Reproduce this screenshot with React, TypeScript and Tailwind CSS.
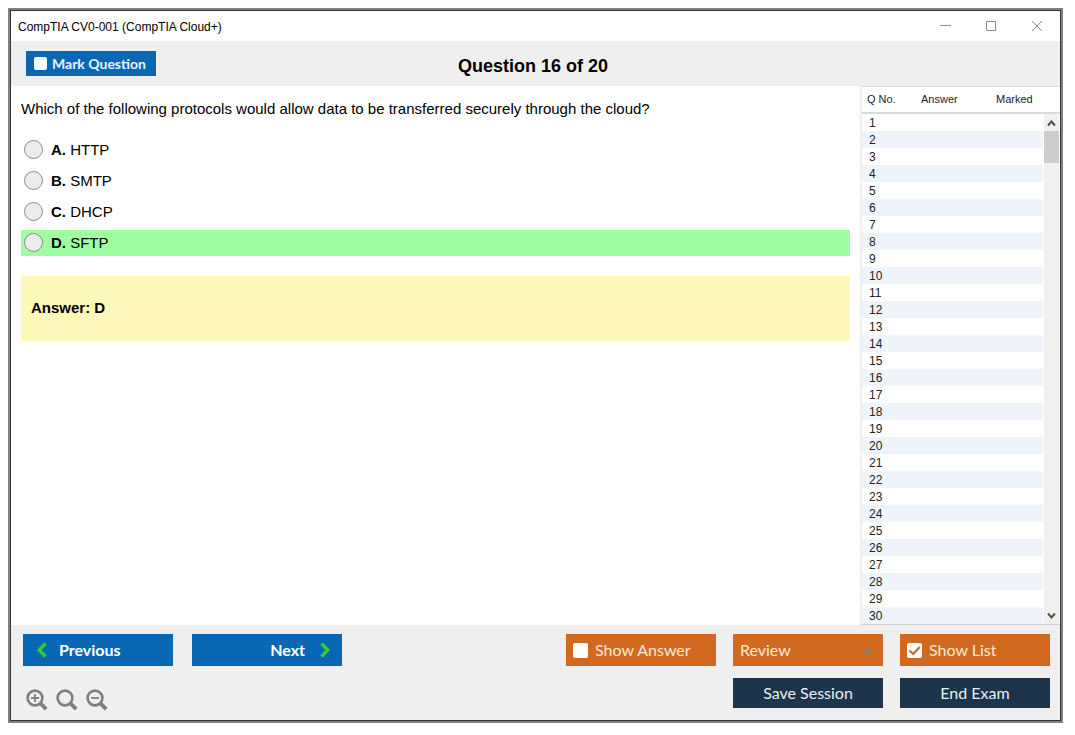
import React, { useState } from 'react';

interface OptionI {
  letter: string;
  text: string;
}

const options: OptionI[] = [
  { letter: 'A', text: 'HTTP' },
  { letter: 'B', text: 'SMTP' },
  { letter: 'C', text: 'DHCP' },
  { letter: 'D', text: 'SFTP' },
];

const correct = 'D';
const rows = Array.from({ length: 30 }, (_, i) => i + 1);

function TitleBar() {
  return (
    <header className="flex h-[30px] items-center justify-between bg-white pl-[7px]">
      <h1 className="pt-px text-[12px] leading-4">CompTIA CV0-001 (CompTIA Cloud+)</h1>
      <div className="flex h-full text-[#8c8c8c]">
        <button aria-label="Minimize" className="flex w-[46px] items-center justify-center">
          <svg width="11" height="11" stroke="currentColor" fill="none"><path d="M0 4.5h11" /></svg>
        </button>
        <button aria-label="Maximize" className="flex w-[46px] items-center justify-center">
          <svg width="11" height="11" stroke="currentColor" fill="none"><path d="M.5.5h9v9h-9z" /></svg>
        </button>
        <button aria-label="Close" className="flex w-[46px] items-center justify-center">
          <svg width="11" height="11" stroke="currentColor" fill="none"><path d="M0 0l10 10M10 0L0 10" /></svg>
        </button>
      </div>
    </header>
  );
}

interface CheckI {
  label: string;
  checked: boolean;
  onChange: (v: boolean) => void;
}

function OrangeCheck({ label, checked, onChange }: CheckI) {
  return (
    <label className="flex h-8 items-center gap-[7px] bg-[#d2691e] pl-[7px] text-[16px] text-[#fbe9dc]">
      <span className="relative flex">
        <input
          type="checkbox"
          checked={checked}
          onChange={(e) => onChange(e.target.checked)}
          className="size-[15px] appearance-none rounded-xs bg-white"
        />
        {checked && (
          <svg className="pointer-events-none absolute inset-0" width="15" height="15" fill="none" stroke="#d2691e" strokeWidth="2.2">
            <path d="M2.5 7.5l3.7 3.5L12.7 4" />
          </svg>
        )}
      </span>
      {label}
    </label>
  );
}

function ZoomButton({ label, mark }: { label: string; mark?: string }) {
  return (
    <button aria-label={label}>
      <svg width="22" height="22" fill="none" stroke="#808080">
        <circle cx="9" cy="9" r="7.4" strokeWidth="2.6" />
        <path d="M14.2 14.2l6 6" strokeWidth="3.8" />
        {mark && <path d={mark} strokeWidth="1.8" />}
      </svg>
    </button>
  );
}

function QuestionList() {
  return (
    <aside className="flex w-[200px] flex-none border-b border-l-2 border-b-[#d0d0d0] border-l-[#efefef]">
      <table className="flex-1 table-fixed border-separate border-spacing-0 self-start text-left text-[#222]">
        <thead>
          <tr className="h-7 text-[11px] leading-4">
            <th className="w-[59px] border-t border-b-2 border-[#d9d9d9] p-0 pb-px pl-[5px] font-normal">Q No.</th>
            <th className="w-[75px] border-t border-b-2 border-[#d9d9d9] p-0 pb-px font-normal">Answer</th>
            <th className="border-t border-b-2 border-[#d9d9d9] p-0 pb-px font-normal">Marked</th>
          </tr>
        </thead>
        <tbody className="text-[12px] leading-4">
          {rows.map((n) => (
            <tr key={n} className="even:bg-[#eef4f9]">
              <td className="p-0 pt-px pl-[7px]">{n}</td>
              <td className="p-0"></td>
              <td className="p-0"></td>
            </tr>
          ))}
        </tbody>
      </table>
      <div className="flex w-[17px] flex-col">
        <div className="h-7 border-t border-b-2 border-[#d9d9d9]" />
        <div className="mr-px ml-px flex flex-1 flex-col items-center bg-[#f0f0f0]">
          <button aria-label="Scroll up" className="flex h-[17px] items-center">
            <svg width="9" height="8" fill="none" stroke="#505050" strokeWidth="2"><path d="M1 6.5l3.5-4 3.5 4" /></svg>
          </button>
          <div className="h-8 w-full bg-[#cdcdcd]" />
          <button aria-label="Scroll down" className="mt-auto flex h-[17px] items-center">
            <svg width="9" height="8" fill="none" stroke="#505050" strokeWidth="2"><path d="M1 1.5l3.5 4 3.5-4" /></svg>
          </button>
        </div>
      </div>
    </aside>
  );
}

export default function App() {
  const [marked, setMarked] = useState(false);
  const [picked, setPicked] = useState('');
  const [showAnswer, setShowAnswer] = useState(false);
  const [showList, setShowList] = useState(true);

  return (
    <div className="flex min-h-screen bg-white pt-2 pr-3 pb-3 pl-2 font-['Liberation_Sans',Arial,sans-serif] text-black">
      <div className="flex flex-1 border-2 border-[#808080]">
        <div className="flex flex-1 flex-col border border-[#333]">
          <TitleBar />

          <div className="flex h-[45px] items-center bg-[#efefef] pl-[15px]">
            <label className="flex h-[25px] w-[130px] items-center gap-[5px] bg-[#0868b5] pl-2 font-['Lato',sans-serif] text-[14px] font-bold text-[#eaf4fc]">
              <input
                type="checkbox"
                checked={marked}
                onChange={(e) => setMarked(e.target.checked)}
                className="size-[13px] appearance-none rounded-xs bg-white checked:bg-[#d2691e]"
              />
              Mark Question
            </label>
            <h2 className="flex-1 pt-1 text-center text-[18px] leading-6 font-bold">Question 16 of 20</h2>
            <div className="w-[150px]" />
          </div>

          <div className="flex flex-1 bg-white">
            <main className="flex-1 px-[10px] pt-[13px] text-[15px] leading-5">
              <p>Which of the following protocols would allow data to be transferred securely through the cloud?</p>
              <div className="mt-[18px] flex flex-col gap-[5px]">
                {options.map((o) => (
                  <label
                    key={o.letter}
                    className={`flex h-[26px] items-center gap-2 pb-px pl-[3px] ${o.letter === correct ? 'bg-[#a0ffa0]' : ''}`}
                  >
                    <input
                      type="radio"
                      name="answer"
                      checked={picked === o.letter}
                      onChange={() => setPicked(o.letter)}
                      className="size-[19px] appearance-none rounded-full border border-[#8c8c8c] bg-[#ececec] checked:bg-[#808080]"
                    />
                    <span><b>{o.letter}.</b> {o.text}</span>
                  </label>
                ))}
              </div>
              <div className="mt-5 flex h-[65px] items-center bg-[#fff8bb] pb-[2px] pl-[10px] font-bold">Answer: {correct}</div>
            </main>
            {showList && <QuestionList />}
          </div>

          <footer className="flex h-[95px] items-start justify-between bg-[#efefef] pt-[9px] pr-[10px] pl-3 font-['Lato',sans-serif]">
            <div>
              <div className="flex gap-[19px] text-[16px] font-bold text-white">
                <button className="flex h-8 w-[150px] items-center gap-3 bg-[#0868b5] pl-[14px]">
                  <svg width="10" height="16" fill="none" stroke="#32cd32" strokeWidth="3.4"><path d="M8.5 1.5L2.2 8l6.3 6.5" /></svg>
                  Previous
                </button>
                <button className="flex h-8 w-[150px] items-center justify-end gap-[15px] bg-[#0868b5] pr-3">
                  Next
                  <svg width="10" height="16" fill="none" stroke="#32cd32" strokeWidth="3.4"><path d="M1.5 1.5L7.8 8l-6.3 6.5" /></svg>
                </button>
              </div>
              <div className="mt-[23px] ml-[3px] flex gap-2">
                <ZoomButton label="Zoom in" mark="M5 9h8M9 5v8" />
                <ZoomButton label="Reset zoom" />
                <ZoomButton label="Zoom out" mark="M5 9h8" />
              </div>
            </div>

            <div className="grid grid-cols-[150px_150px_150px] gap-x-[17px] gap-y-3">
              <OrangeCheck label="Show Answer" checked={showAnswer} onChange={setShowAnswer} />
              <div className="relative">
                <select aria-label="Review" className="h-8 w-full appearance-none bg-[#d2691e] pl-[7px] text-[16px] text-[#fbe9dc]">
                  <option>Review</option>
                </select>
                <svg className="pointer-events-none absolute top-[13px] right-[10px]" width="10" height="6" fill="#8a8078"><path d="M0 6l5-6 5 6z" /></svg>
              </div>
              <OrangeCheck label="Show List" checked={showList} onChange={setShowList} />
              <button className="col-start-2 h-[30px] bg-[#1c354a] text-[16px] text-[#e8eef2]">Save Session</button>
              <button className="h-[30px] bg-[#1c354a] text-[16px] text-[#e8eef2]">End Exam</button>
            </div>
          </footer>
        </div>
      </div>
    </div>
  );
}
